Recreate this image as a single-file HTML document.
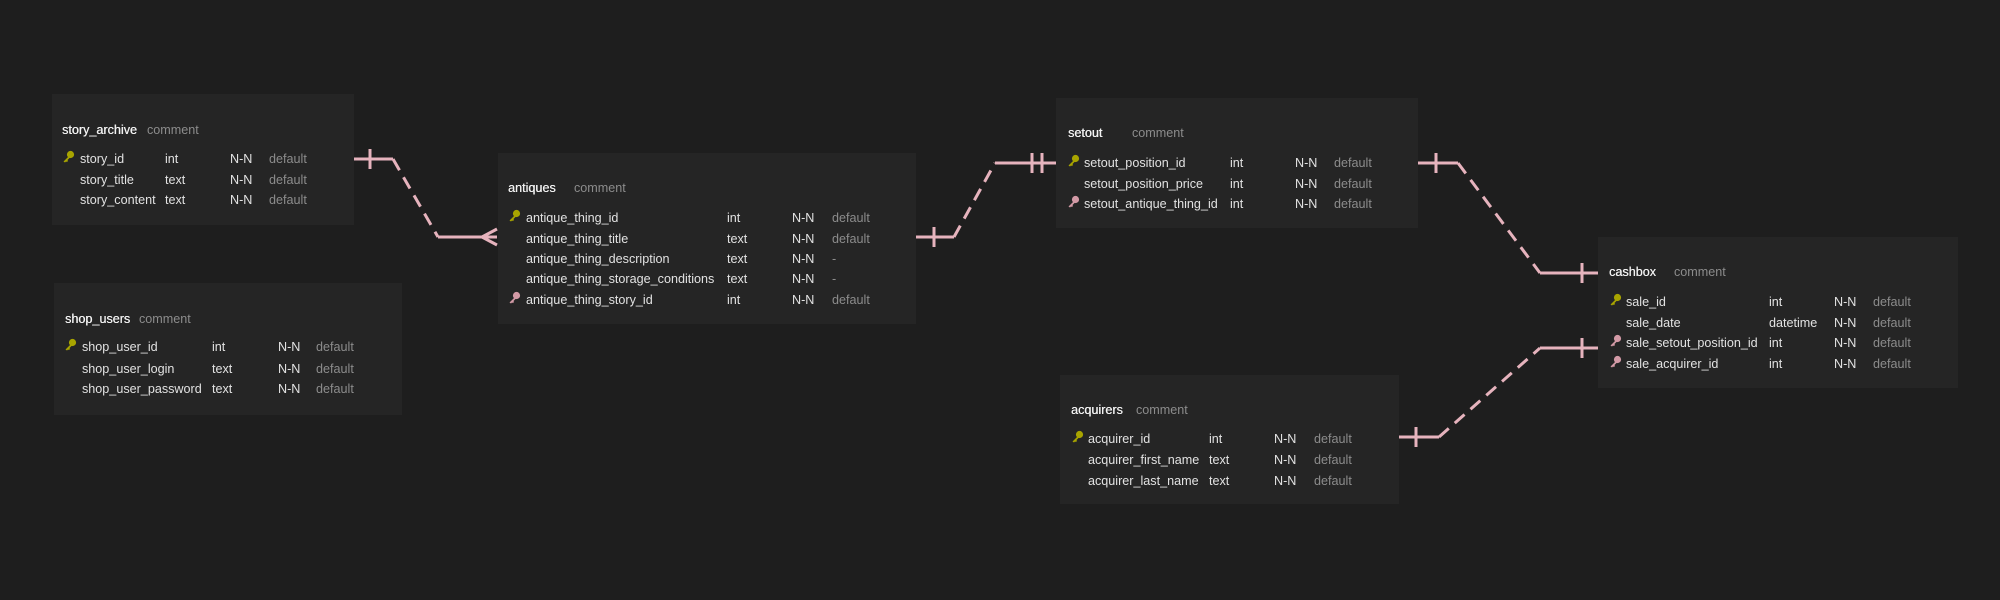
<!DOCTYPE html>
<html><head><meta charset="utf-8"><style>
html,body{margin:0;padding:0;background:#1e1e1e;width:2000px;height:600px;overflow:hidden}
body{position:relative;font-family:"Liberation Sans",sans-serif;font-size:12.6px;color:#e2e2e2}
.b{position:absolute;background:#252525}
.t{position:absolute;white-space:nowrap;line-height:16px}
.h{color:#f2f2f2;text-shadow:0.3px 0 0 #f2f2f2}
.c{color:#8c8c8c}
.k{position:absolute;width:13px;height:13px}
svg.l{position:absolute;left:0;top:0}
</style></head><body>
<svg width="0" height="0" style="position:absolute"><defs>
<symbol id="key" viewBox="0 0 13 13"><circle cx="8.5" cy="4.5" r="3.6"/><path d="M6.5 6.5 L1.5 11.5 L3 12.5 L4 11.5 L5 12 L6 11 L5.5 10 L8 7.5Z"/></symbol>
</defs></svg>

<svg class="l" width="2000" height="600">
<g stroke="#e6b3bd" stroke-width="3" fill="none">
<path d="M354 159 H393"/><path d="M370 149 V169"/>
<path d="M393 159 L438 237" stroke-dasharray="13 8"/>
<path d="M438 237 H497"/><path d="M482 237 L497 229 M482 237 L497 245"/>
<path d="M916 237 H954"/><path d="M934 227 V247"/>
<path d="M954 237 L995 163" stroke-dasharray="13 8"/>
<path d="M995 163 H1056"/><path d="M1032 153 V173 M1042 153 V173"/>
<path d="M1418 163 H1458"/><path d="M1436 153 V173"/>
<path d="M1458 163 L1540 273" stroke-dasharray="13 8"/>
<path d="M1540 273 H1598"/><path d="M1582 263 V283"/>
<path d="M1399 437 H1439"/><path d="M1416 427 V447"/>
<path d="M1439 437 L1540 348" stroke-dasharray="13 8"/>
<path d="M1540 348 H1598"/><path d="M1582 338 V358"/>
</g></svg>

<!-- story_archive -->
<div class="b" style="left:52px;top:94px;width:302px;height:131px"></div>
<div class="t h" style="left:62px;top:122px">story_archive</div><div class="t c" style="left:147px;top:122px">comment</div>
<svg class="k" style="left:62px;top:150px" fill="#a8a400"><use href="#key"/></svg>
<div class="t" style="left:80px;top:151px">story_id</div><div class="t" style="left:165px;top:151px">int</div><div class="t" style="left:230px;top:151px">N-N</div><div class="t c" style="left:269px;top:151px">default</div>
<div class="t" style="left:80px;top:172px">story_title</div><div class="t" style="left:165px;top:172px">text</div><div class="t" style="left:230px;top:172px">N-N</div><div class="t c" style="left:269px;top:172px">default</div>
<div class="t" style="left:80px;top:192px">story_content</div><div class="t" style="left:165px;top:192px">text</div><div class="t" style="left:230px;top:192px">N-N</div><div class="t c" style="left:269px;top:192px">default</div>

<!-- shop_users -->
<div class="b" style="left:54px;top:283px;width:348px;height:132px"></div>
<div class="t h" style="left:65px;top:311px">shop_users</div><div class="t c" style="left:139px;top:311px">comment</div>
<svg class="k" style="left:64px;top:338px" fill="#a8a400"><use href="#key"/></svg>
<div class="t" style="left:82px;top:339px">shop_user_id</div><div class="t" style="left:212px;top:339px">int</div><div class="t" style="left:278px;top:339px">N-N</div><div class="t c" style="left:316px;top:339px">default</div>
<div class="t" style="left:82px;top:361px">shop_user_login</div><div class="t" style="left:212px;top:361px">text</div><div class="t" style="left:278px;top:361px">N-N</div><div class="t c" style="left:316px;top:361px">default</div>
<div class="t" style="left:82px;top:381px">shop_user_password</div><div class="t" style="left:212px;top:381px">text</div><div class="t" style="left:278px;top:381px">N-N</div><div class="t c" style="left:316px;top:381px">default</div>

<!-- antiques -->
<div class="b" style="left:498px;top:153px;width:418px;height:171px"></div>
<div class="t h" style="left:508px;top:180px">antiques</div><div class="t c" style="left:574px;top:180px">comment</div>
<svg class="k" style="left:508px;top:209px" fill="#a8a400"><use href="#key"/></svg>
<div class="t" style="left:526px;top:210px">antique_thing_id</div><div class="t" style="left:727px;top:210px">int</div><div class="t" style="left:792px;top:210px">N-N</div><div class="t c" style="left:832px;top:210px">default</div>
<div class="t" style="left:526px;top:231px">antique_thing_title</div><div class="t" style="left:727px;top:231px">text</div><div class="t" style="left:792px;top:231px">N-N</div><div class="t c" style="left:832px;top:231px">default</div>
<div class="t" style="left:526px;top:251px">antique_thing_description</div><div class="t" style="left:727px;top:251px">text</div><div class="t" style="left:792px;top:251px">N-N</div><div class="t c" style="left:832px;top:251px">-</div>
<div class="t" style="left:526px;top:271px">antique_thing_storage_conditions</div><div class="t" style="left:727px;top:271px">text</div><div class="t" style="left:792px;top:271px">N-N</div><div class="t c" style="left:832px;top:271px">-</div>
<svg class="k" style="left:508px;top:291px" fill="#d39aa6"><use href="#key"/></svg>
<div class="t" style="left:526px;top:292px">antique_thing_story_id</div><div class="t" style="left:727px;top:292px">int</div><div class="t" style="left:792px;top:292px">N-N</div><div class="t c" style="left:832px;top:292px">default</div>

<!-- setout -->
<div class="b" style="left:1056px;top:98px;width:362px;height:130px"></div>
<div class="t h" style="left:1068px;top:125px">setout</div><div class="t c" style="left:1132px;top:125px">comment</div>
<svg class="k" style="left:1067px;top:154px" fill="#a8a400"><use href="#key"/></svg>
<div class="t" style="left:1084px;top:155px">setout_position_id</div><div class="t" style="left:1230px;top:155px">int</div><div class="t" style="left:1295px;top:155px">N-N</div><div class="t c" style="left:1334px;top:155px">default</div>
<div class="t" style="left:1084px;top:176px">setout_position_price</div><div class="t" style="left:1230px;top:176px">int</div><div class="t" style="left:1295px;top:176px">N-N</div><div class="t c" style="left:1334px;top:176px">default</div>
<svg class="k" style="left:1067px;top:195px" fill="#d39aa6"><use href="#key"/></svg>
<div class="t" style="left:1084px;top:196px">setout_antique_thing_id</div><div class="t" style="left:1230px;top:196px">int</div><div class="t" style="left:1295px;top:196px">N-N</div><div class="t c" style="left:1334px;top:196px">default</div>

<!-- cashbox -->
<div class="b" style="left:1598px;top:237px;width:360px;height:151px"></div>
<div class="t h" style="left:1609px;top:264px">cashbox</div><div class="t c" style="left:1674px;top:264px">comment</div>
<svg class="k" style="left:1609px;top:293px" fill="#a8a400"><use href="#key"/></svg>
<div class="t" style="left:1626px;top:294px">sale_id</div><div class="t" style="left:1769px;top:294px">int</div><div class="t" style="left:1834px;top:294px">N-N</div><div class="t c" style="left:1873px;top:294px">default</div>
<div class="t" style="left:1626px;top:315px">sale_date</div><div class="t" style="left:1769px;top:315px">datetime</div><div class="t" style="left:1834px;top:315px">N-N</div><div class="t c" style="left:1873px;top:315px">default</div>
<svg class="k" style="left:1609px;top:334px" fill="#d39aa6"><use href="#key"/></svg>
<div class="t" style="left:1626px;top:335px">sale_setout_position_id</div><div class="t" style="left:1769px;top:335px">int</div><div class="t" style="left:1834px;top:335px">N-N</div><div class="t c" style="left:1873px;top:335px">default</div>
<svg class="k" style="left:1609px;top:355px" fill="#d39aa6"><use href="#key"/></svg>
<div class="t" style="left:1626px;top:356px">sale_acquirer_id</div><div class="t" style="left:1769px;top:356px">int</div><div class="t" style="left:1834px;top:356px">N-N</div><div class="t c" style="left:1873px;top:356px">default</div>

<!-- acquirers -->
<div class="b" style="left:1060px;top:375px;width:339px;height:129px"></div>
<div class="t h" style="left:1071px;top:402px">acquirers</div><div class="t c" style="left:1136px;top:402px">comment</div>
<svg class="k" style="left:1071px;top:430px" fill="#a8a400"><use href="#key"/></svg>
<div class="t" style="left:1088px;top:431px">acquirer_id</div><div class="t" style="left:1209px;top:431px">int</div><div class="t" style="left:1274px;top:431px">N-N</div><div class="t c" style="left:1314px;top:431px">default</div>
<div class="t" style="left:1088px;top:452px">acquirer_first_name</div><div class="t" style="left:1209px;top:452px">text</div><div class="t" style="left:1274px;top:452px">N-N</div><div class="t c" style="left:1314px;top:452px">default</div>
<div class="t" style="left:1088px;top:473px">acquirer_last_name</div><div class="t" style="left:1209px;top:473px">text</div><div class="t" style="left:1274px;top:473px">N-N</div><div class="t c" style="left:1314px;top:473px">default</div>
</body></html>
